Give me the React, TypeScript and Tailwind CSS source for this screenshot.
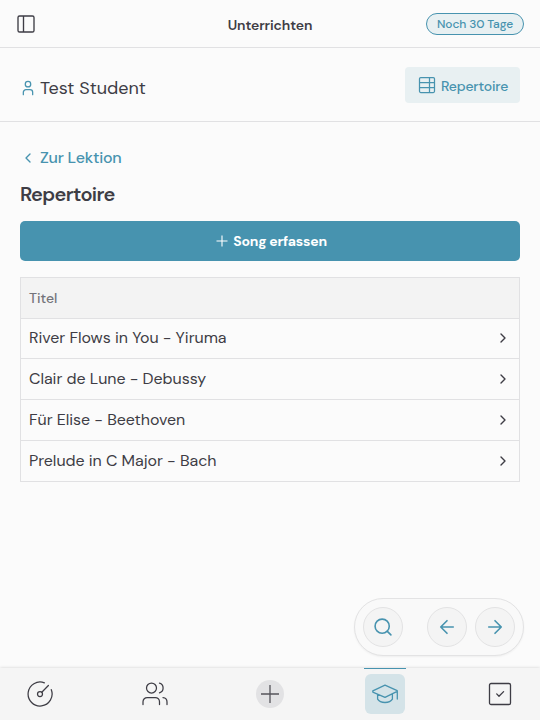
import type { ReactNode } from 'react';

type IconProps = { size: number; stroke?: number; className?: string; children: ReactNode };

function Icon({ size, stroke = 1.5, className = '', children }: IconProps) {
  return (
    <svg
      width={size}
      height={size}
      viewBox="0 0 24 24"
      fill="none"
      stroke="currentColor"
      strokeWidth={stroke}
      strokeLinecap="round"
      strokeLinejoin="round"
      className={`block shrink-0 ${className}`}
    >
      {children}
    </svg>
  );
}

const songs = [
  { title: 'River Flows in You - Yiruma', height: 'h-10 pb-0.5' },
  { title: 'Clair de Lune - Debussy', height: 'h-[41px]' },
  { title: 'Für Elise - Beethoven', height: 'h-[41px]' },
  { title: 'Prelude in C Major - Bach', height: 'h-[41px]' },
];

function Header() {
  return (
    <header className="grid h-12 shrink-0 grid-cols-[1fr_auto_1fr] items-center border-b border-[#e1e1e3] px-4">
      <svg width="20" height="20" viewBox="0 0 20 20" fill="none" stroke="currentColor" strokeWidth="1.35" className="block">
        <rect x="2" y="2" width="16" height="16" rx="1.6" />
        <path d="M7.5 2v16" />
      </svg>
      <h1 className="pt-[3px] text-[14px] leading-5 font-semibold tracking-[-0.13px]">Unterrichten</h1>
      <div className="flex h-[22px] w-[98px] items-center justify-center justify-self-end rounded-full border border-[#4793af] bg-[#e8f0f2] text-[12px] font-medium tracking-[-0.12px] whitespace-nowrap text-[#4793af]">
        Noch 30 Tage
      </div>
    </header>
  );
}

function StudentBar() {
  return (
    <section className="flex h-[74px] shrink-0 items-start justify-between border-b border-[#e1e1e3] px-5 pt-[19px]">
      <div className="flex items-center pt-[7px]">
        <Icon size={16} stroke={1.9} className="text-[#4793af]">
          <circle cx="12" cy="6.3" r="4.1" />
          <path d="M5 22v-3.5a4 4 0 0 1 4-4h6a4 4 0 0 1 4 4V22" />
        </Icon>
        <span className="ml-1 text-[18px] leading-7">Test Student</span>
      </div>
      <button className="flex h-9 w-[115px] items-center rounded bg-[#e8f0f2] pl-[13px] text-[#4793af]">
        <svg width="18" height="18" viewBox="0 0 18 18" fill="none" stroke="currentColor" strokeWidth="1.25" className="block shrink-0">
          <rect x="1.5" y="1.5" width="15" height="15" rx="1.2" />
          <path d="M1.5 6.5h15M1.5 11.5h15M11.5 1.5v15" />
        </svg>
        <span className="ml-[5px] pt-[2px] text-[14px] leading-5 font-medium tracking-[-0.2px]">Repertoire</span>
      </button>
    </section>
  );
}

function SongTable() {
  return (
    <div className="mt-4 border border-[#e1e1e3]">
      <div className="flex h-[41px] items-center border-b border-[#e1e1e3] bg-[#f3f3f3] px-2 text-[14px] font-medium text-[#73737a]">
        Titel
      </div>
      {songs.map((song) => (
        <div
          key={song.title}
          className={`flex items-center justify-between border-b border-[#e1e1e3] px-2 last:h-10 last:border-b-0 ${song.height}`}
        >
          <span className="text-[16px] leading-6 tracking-[-0.04px]">{song.title}</span>
          <Icon size={16} stroke={2.1}>
            <path d="m9 18 6-6-6-6" />
          </Icon>
        </div>
      ))}
    </div>
  );
}

function FloatingControls() {
  const button = 'flex size-10 items-center justify-center rounded-full border border-[#e3e3e4] bg-[#f4f4f4]';
  return (
    <div className="mr-4 mb-3 flex h-[58px] items-center gap-2 self-end rounded-full border border-[#e3e3e4] bg-[#f9f9f9] px-2 shadow-[0_1px_2px_rgba(0,0,0,0.05)]">
      <button className={`${button} mr-4`}>
        <Icon size={20} stroke={1.9}>
          <circle cx="11" cy="11" r="8.5" />
          <path d="m17.2 17.2 4.3 4.3" />
        </Icon>
      </button>
      <button className={button}>
        <Icon size={20} stroke={2}>
          <path d="M19.5 12h-15M12 19.5 4.5 12 12 4.5" />
        </Icon>
      </button>
      <button className={button}>
        <Icon size={20} stroke={2}>
          <path d="M4.5 12h15M12 4.5l7.5 7.5-7.5 7.5" />
        </Icon>
      </button>
    </div>
  );
}

function NavItem({ children }: { children: ReactNode }) {
  return <button className="flex size-10 items-center justify-center rounded-md">{children}</button>;
}

function BottomNav() {
  return (
    <nav className="relative flex h-[52px] shrink-0 items-center justify-between bg-[#f5f5f5] px-5 shadow-[0_0_3px_rgba(0,0,0,0.18)]">
      <NavItem>
        <svg width="28" height="28" viewBox="0 0 28 28" fill="none" stroke="currentColor" strokeWidth="1.25" strokeLinecap="round">
          <path d="M18.4 2.8A12 12 0 1 0 25.3 9.7" />
          <circle cx="14" cy="14" r="2.5" />
          <path d="m15.8 12.2 6.6-6.7" />
        </svg>
      </NavItem>
      <NavItem>
        <svg width="28" height="28" viewBox="0 0 28 28" fill="none" stroke="currentColor" strokeWidth="1.25" strokeLinecap="round">
          <circle cx="10.5" cy="8" r="5" />
          <path d="M2 24.5v-2.8a4.2 4.2 0 0 1 4.2-4.2h8.1a4.2 4.2 0 0 1 4.2 4.2v2.8M18.5 3.2a5 5 0 0 1 0 9.6M22 17.6a4.3 4.3 0 0 1 4 4.3v2.6" />
        </svg>
      </NavItem>
      <NavItem>
        <span className="flex size-7 items-center justify-center rounded-full bg-[#e2e2e4]">
          <svg width="20" height="20" viewBox="0 0 20 20" fill="none" stroke="#55545a" strokeWidth="1.3">
            <path d="M10 1v18M1 10h18" />
          </svg>
        </span>
      </NavItem>
      <div className="relative flex size-10 items-center justify-center rounded-md bg-[#d4e3e8] text-[#4793af]">
        <span className="absolute -top-1.5 -left-px h-px w-[42px] bg-[#4793af]" />
        <svg width="28" height="28" viewBox="0 0 28 28" fill="none" stroke="currentColor" strokeWidth="1.3" strokeLinecap="round" strokeLinejoin="round">
          <path d="M14 5.2 26.2 10.6v.8L14 17.4 1.8 12.1v-1.3L14 5.2ZM26.3 11v8M6.6 14.4v4.8c2.7 4.4 12.1 4.4 14.8 0v-5.3" />
        </svg>
      </div>
      <NavItem>
        <svg width="24" height="24" viewBox="0 0 24 24" fill="none" stroke="currentColor" strokeWidth="1.3" strokeLinecap="round" strokeLinejoin="round">
          <rect x="1.5" y="1.5" width="21" height="21" rx="1.6" />
          <path d="m8.7 11.9 2.3 2.3 4.6-4.6" />
        </svg>
      </NavItem>
    </nav>
  );
}

export default function App() {
  return (
    <div className="flex h-[720px] w-[540px] flex-col overflow-hidden bg-[#fbfbfb] font-['DM_Sans','Inter',sans-serif] text-[#3e3d45] antialiased [font-optical-sizing:none]">
      <Header />
      <StudentBar />
      <main className="flex-1 px-5 pt-6">
        <a className="flex h-6 items-center text-[#4793af]">
          <Icon size={16} stroke={2}>
            <path d="m15 18-6-6 6-6" />
          </Icon>
          <span className="ml-1 text-[16px] leading-6 font-medium tracking-[-0.21px]">Zur Lektion</span>
        </a>
        <h2 className="mt-[10px] h-7 text-[20px] leading-7 font-semibold tracking-[-0.68px]">Repertoire</h2>
        <button className="mt-[13px] flex h-10 w-full items-center justify-center rounded-[5px] bg-[#4793af] pl-[3px] text-white">
          <svg width="12" height="12" viewBox="0 0 12 12" fill="none" stroke="currentColor" strokeWidth="1.1" className="mr-[5px]">
            <path d="M6 .5v11M.5 6h11" />
          </svg>
          <span className="text-[14px] font-bold tracking-[-0.22px]">Song erfassen</span>
        </button>
        <SongTable />
      </main>
      <div className="flex shrink-0 flex-col text-[#4793af]">
        <FloatingControls />
      </div>
      <BottomNav />
    </div>
  );
}
